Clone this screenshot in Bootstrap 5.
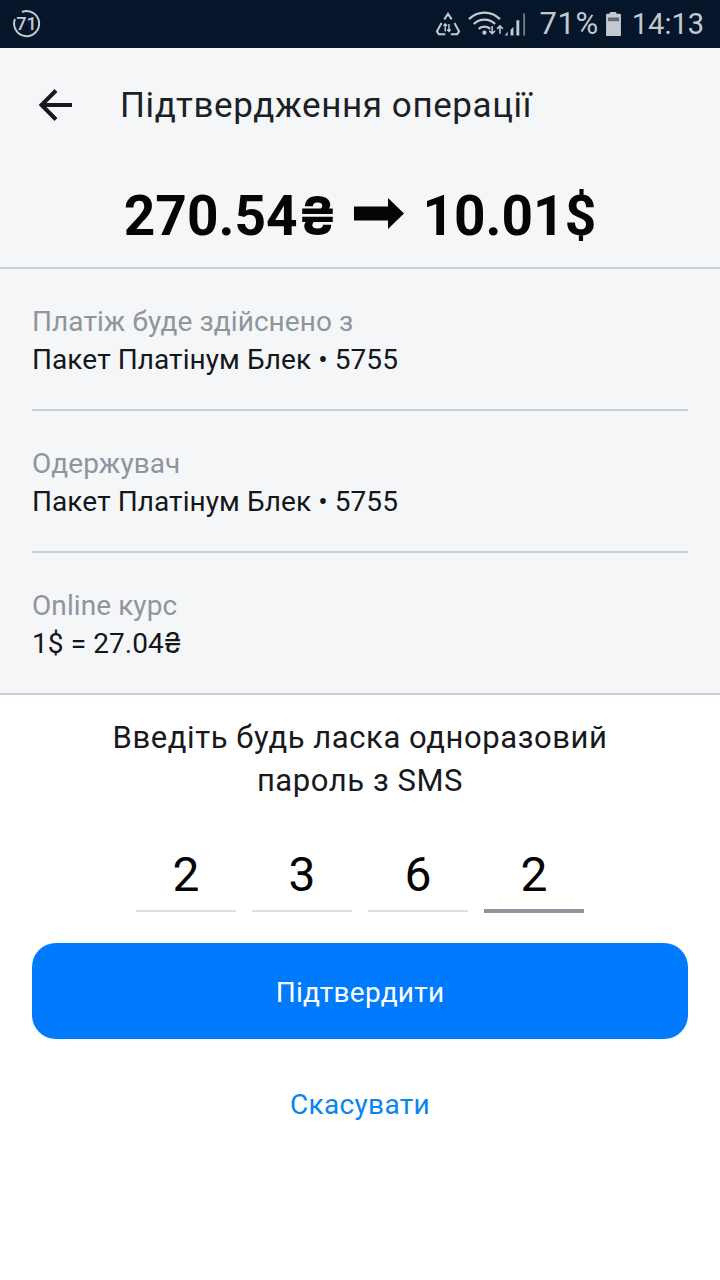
<!DOCTYPE html>
<html lang="uk">
<head>
<meta charset="utf-8">
<link href="https://cdn.jsdelivr.net/npm/bootstrap@5.3.0/dist/css/bootstrap.min.css" rel="stylesheet">
<style>
html,body{margin:0;height:1280px;background:#fff;font-family:Roboto,"Liberation Sans",sans-serif;overflow:hidden}
.status-strip{height:48px;background:#06162a;color:#c3c9cf;padding:0 16px 0 12px;line-height:48px}
.status-ico{display:block}
.status-wifi{margin-left:7px}
.status-batt{margin-left:6px}
.status-pct{font-size:31px;line-height:48px;margin-left:11px;letter-spacing:.6px}
.status-clock{font-size:29px;line-height:48px;margin-left:10px}
.upper-part{background:#f5f6f8;height:647px;border-bottom:2px solid #c5ced8}
.head-row{height:112px;padding-left:38px;padding-top:2px}
.head-title{font-size:35px;color:#1c1f24;margin-left:46px;margin-top:2px;letter-spacing:.6px;line-height:40px}
.sum-line{height:109px;border-bottom:2px solid #c3cfdc;font-size:55px;font-weight:700;color:#050505;line-height:58px;padding-top:27px;gap:18px}
.arrow-sum{margin-top:11px}
.uah-sign{font-family:Inter,Roboto,sans-serif}
.sum-line .uah-sign{font-size:54px;letter-spacing:-1px}
.detail-wrap{padding:0 32px}
.detail-item{height:142px;border-bottom:2px solid #c3cfdc;padding-top:34px}
.detail-item:last-child{border-bottom:0}
.detail-lab{font-size:28px;line-height:38px;color:#8e959d;letter-spacing:.08px}
.detail-val{font-size:28px;line-height:38px;color:#14171a;letter-spacing:.08px}
.detail-val .uah-sign{font-size:28px;line-height:1}
.sms-part{background:#fff}
.sms-ask{font-size:31px;line-height:43px;color:#17191c;text-align:center;padding-top:21px;letter-spacing:.57px}
.code-row{gap:16px;margin-top:41px}
.code-cell{width:100px;height:69px;text-align:center;font-size:48px;line-height:64px;color:#050505;border-bottom:2px solid #dcdfe2}
.code-cell.is-on{border-bottom:4px solid #8e959d;height:70px}
.go-btn{display:block;width:656px;margin:30px 32px 0;height:95.500px;padding-top:10px;background:#007aff;border:0;border-radius:24px;color:#fff;font-size:28px;letter-spacing:.25px}
.cancel-link{font-size:28px;color:#0a84f0;text-align:center;margin-top:46.500px;line-height:40px;letter-spacing:.3px}
</style>
</head>
<body>
<div class="status-strip d-flex align-items-center justify-content-between">
  <svg class="status-ico" width="30" height="30" viewBox="0 0 30 30"><path d="M3 10A12.500 12.500 0 1 0 10 3" fill="none" stroke="#c3c9cf" stroke-width="2"/><text x="14.5" y="20.500" text-anchor="middle" font-size="18" font-weight="500" font-family="Roboto" fill="#c3c9cf">71</text></svg>
  <div class="d-flex align-items-center">
    <svg class="status-ico" width="26" height="24" viewBox="0 0 28 26" fill="none" stroke="#c3c9cf" stroke-width="2.2"><path d="M10 8l4-6 4 6M21 12l5 9-2 3h-7M7 12l-5 9 2 3h7"/><path d="M11 13v8M15 21v-8M9 15l2-2 2 2M13 19l2 2 2-2" stroke-width="1.6"/></svg>
    <svg class="status-ico status-wifi" width="60" height="28" viewBox="0 0 62 28" fill="none"><path d="M1 9c9-9 23-9 32 0M6 14c6-6 16-6 22 0M11 19c3-3 9-3 12 0" stroke="#c3c9cf" stroke-width="2.4"/><circle cx="17" cy="23" r="2.2" fill="#c3c9cf"/><path d="M25 16v8M22 21l3 3 3-3M33 24v-8M30 19l3-3 3 3" stroke="#c3c9cf" stroke-width="1.6"/><path d="M38 26h3v-4zM44 26h3V17l-3 3zM50 26h3V10h-3z" fill="#c3c9cf"/><path d="M57 26h2V3h-2z" fill="#6d7782"/></svg>
    <span class="status-pct">71%</span>
    <svg class="status-ico status-batt" width="17" height="26" viewBox="0 0 18 28"><path d="M5 3V1h7v2h4a1 1 0 011 1v22a1 1 0 01-1 1H2a1 1 0 01-1-1V4a1 1 0 011-1z" fill="#c3c9cf"/><rect x="3" y="7" width="12" height="4" fill="#5f6b78"/></svg>
    <span class="status-clock">14:13</span>
  </div>
</div>
<div class="upper-part">
  <div class="head-row d-flex align-items-center">
    <svg width="36" height="36" viewBox="0 0 36 36" fill="none" stroke="#17191c" stroke-width="4"><path d="M34 18H4M18 3.500L3.500 18 18 32.500"/></svg>
    <span class="head-title">Підтвердження операції</span>
  </div>
  <div class="sum-line d-flex justify-content-center">
    <span>270.54<span class="uah-sign">₴</span></span>
    <svg width="50" height="31" viewBox="0 0 50 31" class="arrow-sum"><path d="M0 8.500h34V0l16 15.500-16 15.500V22.500H0z" fill="#050505"/></svg>
    <span>10.01$</span>
  </div>
  <div class="detail-wrap">
    <div class="detail-item"><div class="detail-lab">Платіж буде здійснено з</div><div class="detail-val">Пакет Платінум Блек • 5755</div></div>
    <div class="detail-item"><div class="detail-lab">Одержувач</div><div class="detail-val">Пакет Платінум Блек • 5755</div></div>
    <div class="detail-item"><div class="detail-lab">Online курс</div><div class="detail-val">1$ = 27.04<span class="uah-sign">₴</span></div></div>
  </div>
</div>
<div class="sms-part">
  <div class="sms-ask">Введіть будь ласка одноразовий<br>пароль з SMS</div>
  <div class="code-row d-flex justify-content-center">
    <div class="code-cell">2</div><div class="code-cell">3</div><div class="code-cell">6</div><div class="code-cell is-on">2</div>
  </div>
  <button class="go-btn btn" type="button">Підтвердити</button>
  <div class="cancel-link">Скасувати</div>
</div>
<script src="https://cdn.jsdelivr.net/npm/bootstrap@5.3.0/dist/js/bootstrap.bundle.min.js"></script>
</body>
</html>
